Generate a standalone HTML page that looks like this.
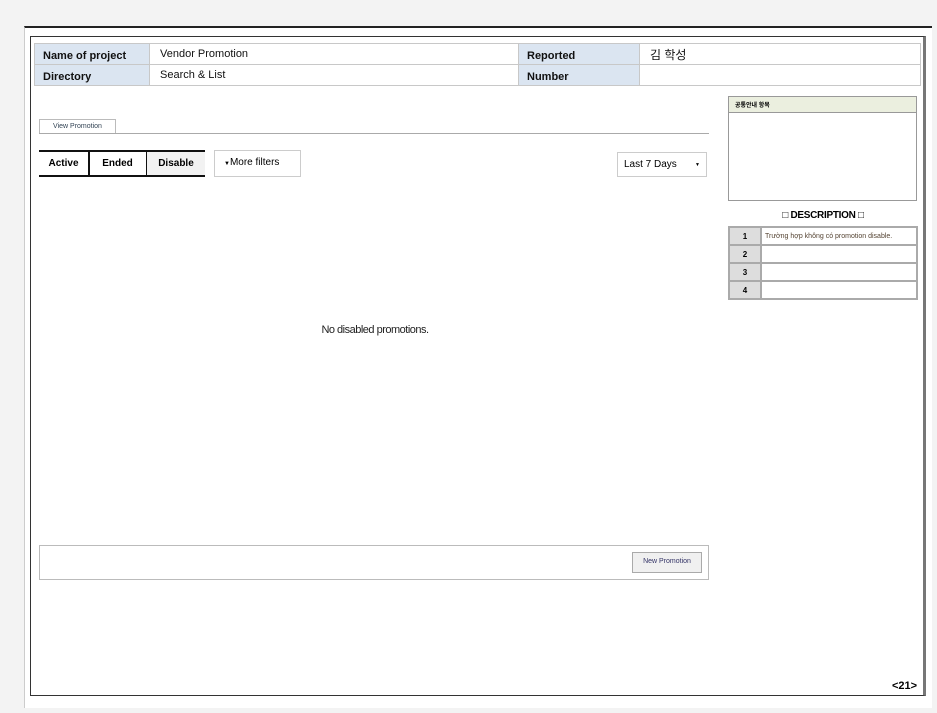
<!DOCTYPE html>
<html><head><meta charset="utf-8"><style>
body{margin:0;width:937px;height:713px;background:#f3f3f3;position:relative;overflow:hidden;font-family:"Liberation Sans","Noto Sans CJK KR",sans-serif;}
.a{position:absolute;box-sizing:border-box;}
.page{left:24px;top:26px;width:908px;height:682px;background:#fff;border-top:2px solid #222;border-left:1px solid #ccc;}
.frame{left:30px;top:36px;width:896px;height:660px;border:1px solid #333;border-right:3px solid #777;}
.lab{background:#dbe5f1;font-weight:bold;font-size:11px;color:#111;padding:6px 0 0 8px;border:1px solid #c8c8c8;}
.val{background:#fff;font-size:11px;color:#111;padding:4px 0 0 10px;border:1px solid #c8c8c8;}
.btn{font-size:10px;font-weight:bold;text-align:center;line-height:24px;border-top:2px solid #111;border-bottom:2px solid #111;}
td{border:2px solid #aaa;font-size:8px;height:16px;padding:0 3px;}
</style></head><body>
<div class="a page"></div>
<div class="a frame"></div>
<div class="a lab" style="left:34px;top:43px;width:116px;height:22px;">Name of project</div>
<div class="a val" style="left:149px;top:43px;width:370px;height:22px;">Vendor Promotion</div>
<div class="a lab" style="left:518px;top:43px;width:122px;height:22px;">Reported</div>
<div class="a val" style="left:639px;top:43px;width:282px;height:22px;font-size:12px;padding-top:2px;">김 학성</div>
<div class="a lab" style="left:34px;top:64px;width:116px;height:22px;">Directory</div>
<div class="a val" style="left:149px;top:64px;width:370px;height:22px;">Search &amp; List</div>
<div class="a lab" style="left:518px;top:64px;width:122px;height:22px;">Number</div>
<div class="a val" style="left:639px;top:64px;width:282px;height:22px;"></div>

<div class="a" style="left:39px;top:119px;width:77px;height:15px;border:1px solid #bbb;border-bottom:none;font-size:7px;color:#345;text-align:center;line-height:13px;">View Promotion</div>
<div class="a" style="left:39px;top:133px;width:670px;height:1px;background:#aaa;"></div>

<div class="a btn" style="left:39px;top:150px;width:51px;height:27px;border-right:2px solid #111;">Active</div>
<div class="a btn" style="left:89px;top:150px;width:59px;height:27px;border-right:2px solid #111;">Ended</div>
<div class="a btn" style="left:147px;top:150px;width:58px;height:27px;background:#f2f2f2;">Disable</div>
<div class="a" style="left:214px;top:150px;width:87px;height:27px;border:1px solid #ccc;font-size:10px;padding:6px 0 0 9px;"><span style="font-size:6px;">▼</span>More filters</div>
<div class="a" style="left:617px;top:152px;width:90px;height:25px;border:1px solid #ccc;font-size:10px;padding:6px 0 0 6px;">Last 7 Days<span style="position:absolute;right:6px;top:9px;font-size:5px;">▼</span></div>

<div class="a" style="left:250px;top:324px;width:250px;text-align:center;font-size:11px;letter-spacing:-0.5px;color:#222;">No disabled promotions.</div>

<div class="a" style="left:39px;top:545px;width:670px;height:35px;border:1px solid #bbb;"></div>
<div class="a" style="left:632px;top:552px;width:70px;height:21px;border:1px solid #aaa;background:#f0f0f0;font-size:7px;color:#336;text-align:center;line-height:18px;">New Promotion</div>

<div class="a" style="left:728px;top:96px;width:189px;height:105px;border:1px solid #999;"></div>
<div class="a" style="left:728px;top:96px;width:189px;height:17px;border:1px solid #999;background:#ebefdf;font-size:6px;font-weight:bold;padding:3px 0 0 6px;">공통안내 항목</div>
<div class="a" style="left:728px;top:210px;width:190px;text-align:center;font-size:10px;font-weight:bold;letter-spacing:-0.3px;">□ DESCRIPTION □</div>
<table class="a" style="left:728px;top:226px;width:190px;border-collapse:collapse;">
<tr><td style="width:24px;background:#ddd;text-align:center;font-weight:bold;">1</td><td style="font-size:7px;color:#543;">Trường hợp không có promotion disable.</td></tr>
<tr><td style="background:#ddd;text-align:center;font-weight:bold;">2</td><td></td></tr>
<tr><td style="background:#ddd;text-align:center;font-weight:bold;">3</td><td></td></tr>
<tr><td style="background:#ddd;text-align:center;font-weight:bold;">4</td><td></td></tr>
</table>
<div class="a" style="left:892px;top:680px;font-size:11px;font-weight:bold;">&lt;21&gt;</div>
</body></html>
